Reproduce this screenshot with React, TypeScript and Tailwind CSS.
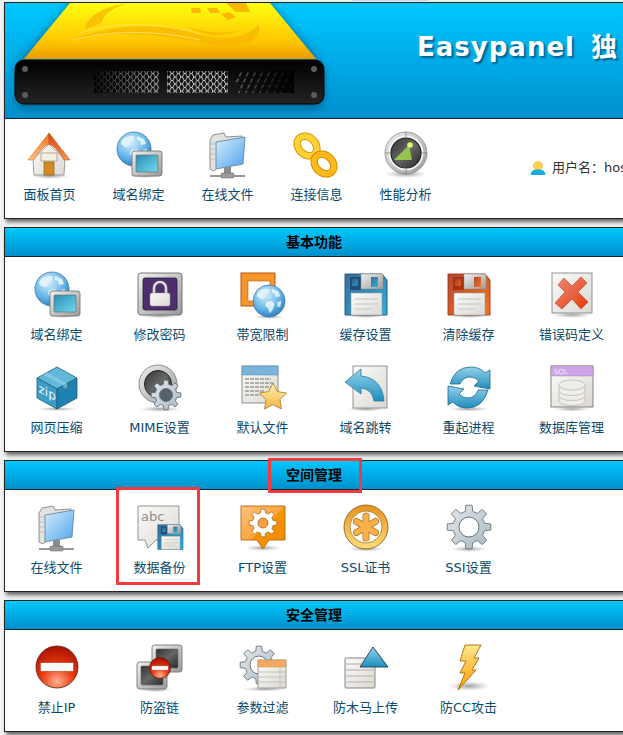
import type { ReactNode } from "react";

// builds a cog outline, returned path is used by all the gear icons
function gearPath(cx: number, cy: number, R: number, r: number, teeth: number): string {
  const step = (Math.PI * 2) / teeth;
  const pts: string[] = [];
  for (let i = 0; i < teeth; i++) {
    const a = i * step - Math.PI / 2;
    const w = step * 0.2;
    const list: [number, number][] = [
      [r, a - w * 1.5],
      [R, a - w * 0.9],
      [R, a + w * 0.9],
      [r, a + w * 1.5],
    ];
    for (const [rad, ang] of list) {
      pts.push(`${(cx + rad * Math.cos(ang)).toFixed(2)},${(cy + rad * Math.sin(ang)).toFixed(2)}`);
    }
  }
  return "M" + pts.join(" L") + " Z";
}

function Defs() {
  return (
    <svg className="absolute w-0 h-0" aria-hidden="true">
      <defs>
        <radialGradient id="sh">
          <stop offset="0" stopColor="#777" stopOpacity="0.7" />
          <stop offset="1" stopColor="#999" stopOpacity="0" />
        </radialGradient>
        <radialGradient id="globe" cx="0.4" cy="0.3" r="0.8">
          <stop offset="0" stopColor="#d8effc" />
          <stop offset="0.55" stopColor="#6ab8ea" />
          <stop offset="1" stopColor="#1d6fb2" />
        </radialGradient>
        <linearGradient id="frame" x1="0" y1="0" x2="1" y2="1">
          <stop offset="0" stopColor="#f0f0ee" />
          <stop offset="1" stopColor="#9a9a98" />
        </linearGradient>
        <linearGradient id="screen" x1="0" y1="0" x2="1" y2="1">
          <stop offset="0" stopColor="#2c8db5" />
          <stop offset="1" stopColor="#70d8ec" />
        </linearGradient>
        <linearGradient id="dark" x1="0" y1="0" x2="1" y2="1">
          <stop offset="0" stopColor="#333" />
          <stop offset="0.5" stopColor="#666" />
          <stop offset="1" stopColor="#2a2a2a" />
        </linearGradient>
        <linearGradient id="paper" x1="0" y1="0" x2="1" y2="1">
          <stop offset="0" stopColor="#fbfbf9" />
          <stop offset="1" stopColor="#dbd8d1" />
        </linearGradient>
        <linearGradient id="folder" x1="0" y1="0" x2="1" y2="1">
          <stop offset="0" stopColor="#d6eefd" />
          <stop offset="1" stopColor="#4fa2ec" />
        </linearGradient>
        <linearGradient id="orange" x1="0" y1="0" x2="1" y2="1">
          <stop offset="0" stopColor="#ffc27a" />
          <stop offset="0.5" stopColor="#ffa53c" />
          <stop offset="0.51" stopColor="#f79200" />
          <stop offset="1" stopColor="#f08a00" />
        </linearGradient>
        <linearGradient id="roofL" x1="0" y1="0" x2="0" y2="1">
          <stop offset="0" stopColor="#f0701c" />
          <stop offset="1" stopColor="#ffc27c" />
        </linearGradient>
        <linearGradient id="roofR" x1="0" y1="0" x2="0" y2="1">
          <stop offset="0" stopColor="#d8420e" />
          <stop offset="1" stopColor="#f6964a" />
        </linearGradient>
        <linearGradient id="floppyBlue" x1="0" y1="0" x2="1" y2="1">
          <stop offset="0" stopColor="#3a6d96" />
          <stop offset="1" stopColor="#2eb0dc" />
        </linearGradient>
        <linearGradient id="floppyRed" x1="0" y1="0" x2="1" y2="1">
          <stop offset="0" stopColor="#b04a30" />
          <stop offset="1" stopColor="#f8741c" />
        </linearGradient>
        <linearGradient id="xRed" x1="0" y1="0" x2="1" y2="1">
          <stop offset="0" stopColor="#e88f80" />
          <stop offset="1" stopColor="#e63a08" />
        </linearGradient>
        <linearGradient id="arrow" x1="0" y1="0" x2="0" y2="1">
          <stop offset="0" stopColor="#93d2ea" />
          <stop offset="1" stopColor="#1f8dbc" />
        </linearGradient>
        <linearGradient id="steel" x1="0" y1="0" x2="1" y2="1">
          <stop offset="0" stopColor="#e4eaee" />
          <stop offset="1" stopColor="#a8b6be" />
        </linearGradient>
        <linearGradient id="ring" x1="0" y1="0" x2="0" y2="1">
          <stop offset="0" stopColor="#e8921e" />
          <stop offset="1" stopColor="#ffdc7a" />
        </linearGradient>
        <radialGradient id="stop" cx="0.5" cy="0.85" r="0.85">
          <stop offset="0" stopColor="#ffb090" />
          <stop offset="0.45" stopColor="#e83a10" />
          <stop offset="1" stopColor="#a81000" />
        </radialGradient>
        <linearGradient id="bolt" x1="0" y1="0" x2="0" y2="1">
          <stop offset="0" stopColor="#ffe88c" />
          <stop offset="1" stopColor="#ff9a00" />
        </linearGradient>
        <linearGradient id="star" x1="0" y1="0" x2="0" y2="1">
          <stop offset="0" stopColor="#fff0b4" />
          <stop offset="1" stopColor="#f5b540" />
        </linearGradient>
      </defs>
    </svg>
  );
}

const Shadow = ({ cx = 24, cy = 45, rx = 20, ry = 3 }: { cx?: number; cy?: number; rx?: number; ry?: number }) => (
  <ellipse cx={cx} cy={cy} rx={rx} ry={ry} fill="url(#sh)" />
);

const Globe = ({ cx, cy, r }: { cx: number; cy: number; r: number }) => (
  <g transform={`translate(${cx} ${cy}) scale(${r / 17})`}>
    <circle r="17" fill="url(#globe)" stroke="#3a78a8" strokeWidth="0.8" />
    <path
      d="M-12,-9 C-8,-13 -2,-14 1,-12 L-1,-8 L-5,-7 L-4,-3 L-9,-2 L-13,-5 Z M3,-13 L10,-10 L12,-5 L7,-4 L6,-8 L3,-9 Z M-3,1 L3,0 L6,3 L4,9 L1,13 L-1,8 L-4,5 Z M9,1 L13,0 L12,6 L9,6 Z"
      fill="#e6f4fc"
      opacity="0.9"
    />
  </g>
);

const Monitor = ({ x, y, w, h, fill }: { x: number; y: number; w: number; h: number; fill: string }) => (
  <g>
    <rect x={x} y={y} width={w} height={h} rx="2.5" fill="url(#frame)" stroke="#777" strokeWidth="0.9" />
    <rect x={x + 4} y={y + 4} width={w - 8} height={h - 8} rx="1" fill={fill} stroke="#666" strokeWidth="0.6" />
  </g>
);

const Floppy = ({ fill, dark }: { fill: string; dark: string }) => (
  <g>
    <path d="M3,3 L40,3 L45,9 L45,44 L3,44 Z" fill={fill} stroke={dark} strokeWidth="0.9" />
    <rect x="8" y="6" width="11" height="13" fill={dark} />
    <rect x="10" y="8" width="6" height="7" fill={fill} opacity="0.7" />
    <rect x="19" y="3" width="22" height="15" fill="url(#frame)" stroke="#888" strokeWidth="0.5" />
    <rect x="29" y="6" width="7" height="10" fill={fill} />
    <rect x="9" y="22" width="31" height="22" fill="url(#paper)" stroke="#999" strokeWidth="0.5" />
    <path d="M13,28 H36 M13,33 H36 M13,38 H30" stroke="#c8c6c0" strokeWidth="1.2" />
  </g>
);

const Gear = ({ cx, cy, R, r, hole, holeFill = "#fff" }: { cx: number; cy: number; R: number; r: number; hole: number; holeFill?: string }) => (
  <g>
    <path d={gearPath(cx, cy, R, r, 8)} fill="url(#steel)" stroke="#68767e" strokeWidth="0.9" strokeLinejoin="round" />
    <circle cx={cx} cy={cy} r={hole} fill={holeFill} stroke="#68767e" strokeWidth="1" />
  </g>
);

const Stop = ({ cx, cy, r }: { cx: number; cy: number; r: number }) => (
  <g>
    <circle cx={cx} cy={cy} r={r} fill="url(#stop)" stroke="#5a1a10" strokeWidth="0.8" />
    <rect x={cx - r * 0.78} y={cy - r * 0.2} width={r * 1.56} height={r * 0.4} fill="#fff" stroke="#b04030" strokeWidth="0.4" />
  </g>
);

const Ico = ({ children }: { children: ReactNode }) => (
  <svg viewBox="0 0 48 48" className="w-12 h-12 block">
    {children}
  </svg>
);

const icons: Record<string, ReactNode> = {
  home: (
    <Ico>
      <Shadow cy={45} rx={19} />
      <path d="M7,28 L23,13 L39,28 L38,44 L8,44 Z" fill="url(#paper)" stroke="#8a8a80" strokeWidth="0.8" />
      <path d="M15,22 H31 V30 H15 Z" fill="#f4efe4" stroke="#a08a60" strokeWidth="0.7" />
      <rect x="18" y="31" width="10" height="13" fill="#d08a20" stroke="#96601a" strokeWidth="0.7" />
      <path d="M23,2 L2,29 L8,29 Q16,15 23,13 Z" fill="url(#roofL)" stroke="#c8601c" strokeWidth="0.5" />
      <path d="M23,2 L44,29 L38,29 Q30,15 23,13 Z" fill="url(#roofR)" stroke="#b8481c" strokeWidth="0.5" />
    </Ico>
  ),
  domain: (
    <Ico>
      <Globe cx={19} cy={18} r={17} />
      <Shadow cx={30} cy={45} rx={15} ry={2} />
      <Monitor x={17} y={20} w={30} h={25} fill="url(#screen)" />
    </Ico>
  ),
  folder: (
    <Ico>
      <path d="M6,9 L9,4 L20,2 L22,6 L38,5 L38,12 L10,40 L6,38 Z" fill="#e2e2e0" stroke="#868686" strokeWidth="0.9" />
      <path d="M6,13 L11,13 M6,18 L11,18 M6,23 L11,23 M6,28 L11,28" stroke="#aaa" strokeWidth="0.6" />
      <path d="M12,11 L41,6 L39,33 L12,38 Z" fill="url(#folder)" stroke="#5a7d9c" strokeWidth="0.8" />
      <rect x="20" y="36" width="7" height="7" fill="#8c8c8c" />
      <path d="M6,45 H41" stroke="#777" strokeWidth="1.6" />
      <rect x="17" y="42" width="13" height="5" rx="1" fill="#9a9a9a" stroke="#666" strokeWidth="0.5" />
    </Ico>
  ),
  chain: (
    <Ico>
      <g fill="none">
        <ellipse cx="14" cy="15" rx="11" ry="8.5" transform="rotate(45 14 15)" stroke="#d99a00" strokeWidth="7.5" />
        <ellipse cx="14" cy="15" rx="11" ry="8.5" transform="rotate(45 14 15)" stroke="#ffd238" strokeWidth="5.5" />
        <ellipse cx="31" cy="33" rx="11" ry="8.5" transform="rotate(45 31 33)" stroke="#d98a00" strokeWidth="7.5" />
        <ellipse cx="31" cy="33" rx="11" ry="8.5" transform="rotate(45 31 33)" stroke="#ffb81c" strokeWidth="5.5" />
      </g>
    </Ico>
  ),
  radar: (
    <Ico>
      <Shadow cy={43} rx={21} ry={4} />
      <circle cx="24" cy="22" r="21" fill="url(#frame)" stroke="#8a8a8a" strokeWidth="0.8" />
      <circle cx="24" cy="22" r="17.5" fill="#f5f5f5" />
      <circle cx="24" cy="22" r="15" fill="url(#dark)" stroke="#222" strokeWidth="1.2" />
      <path d="M24,1 V6 M24,38 V43 M3,22 H8 M40,22 H45" stroke="#777" strokeWidth="0.7" />
      <path d="M27,14 L30,29 L12,29 Z" fill="#9cc850" opacity="0.95" />
      <circle cx="28" cy="14" r="2.8" fill="#e8f070" />
    </Ico>
  ),
  lock: (
    <Ico>
      <Shadow cy={45} rx={20} ry={2} />
      <rect x="2" y="2" width="44" height="42" rx="3" fill="url(#frame)" stroke="#666" strokeWidth="0.9" />
      <rect x="7" y="7" width="34" height="32" rx="2" fill="#4c2f6c" stroke="#2a1a40" strokeWidth="0.8" />
      <path d="M18,23 V17 A6,6 0 0 1 30,17 V23" fill="none" stroke="#dcdcd6" strokeWidth="2.6" />
      <rect x="14" y="22" width="20" height="13" rx="2" fill="url(#paper)" stroke="#999" strokeWidth="0.5" />
    </Ico>
  ),
  bandwidth: (
    <Ico>
      <rect x="2" y="2" width="34" height="33" fill="#f6952c" stroke="#b85a10" strokeWidth="1" />
      <rect x="9" y="10" width="22" height="20" fill="#fff" stroke="#b85a10" strokeWidth="0.6" />
      <Shadow cx={30} cy={46} rx={15} ry={2} />
      <Globe cx={30} cy={30} r={16} />
    </Ico>
  ),
  floppyBlue: (
    <Ico>
      <Shadow cy={45} rx={20} ry={2} />
      <Floppy fill="url(#floppyBlue)" dark="#1f4f7a" />
    </Ico>
  ),
  floppyRed: (
    <Ico>
      <Shadow cy={45} rx={20} ry={2} />
      <Floppy fill="url(#floppyRed)" dark="#a83216" />
    </Ico>
  ),
  error: (
    <Ico>
      <Shadow cy={44} rx={20} ry={3} />
      <rect x="4" y="2" width="40" height="40" fill="url(#paper)" stroke="#888" strokeWidth="0.9" />
      <path
        d="M10,14 L16,7 L24,15 L33,6 L39,12 L30,21 L40,31 L33,38 L24,28 L14,38 L7,32 L17,21 Z"
        fill="url(#xRed)"
        stroke="#c04020"
        strokeWidth="0.6"
      />
    </Ico>
  ),
  zip: (
    <Ico>
      <Shadow cy={45} rx={20} ry={2} />
      <path d="M24,3 L44,14 L24,25 L4,14 Z" fill="#62b8d8" stroke="#225e80" strokeWidth="0.8" />
      <path d="M4,14 L24,25 L24,45 L4,34 Z" fill="#3c9ec8" stroke="#225e80" strokeWidth="0.8" />
      <path d="M44,14 L24,25 L24,45 L44,34 Z" fill="#1f82ae" stroke="#225e80" strokeWidth="0.8" />
      <path d="M14,8.5 L34,19.5 L34,25 L30,23 L30,21 L10,11 Z" fill="#8fd0e6" opacity="0.6" />
      <text x="0" y="0" fontSize="12" fill="#eaf7fc" fontFamily="DejaVu Sans, sans-serif" transform="translate(5.5 28) skewY(28)">
        zip
      </text>
    </Ico>
  ),
  mime: (
    <Ico>
      <Shadow cy={45} rx={20} ry={3} />
      <circle cx="22" cy="20" r="19" fill="url(#frame)" stroke="#777" strokeWidth="0.8" />
      <circle cx="22" cy="20" r="13.5" fill="url(#dark)" stroke="#222" strokeWidth="1" />
      <Gear cx={30} cy={31} R={15} r={11} hole={6.5} holeFill="#55606a" />
    </Ico>
  ),
  docStar: (
    <Ico>
      <rect x="3" y="2" width="36" height="37" fill="url(#paper)" stroke="#777" strokeWidth="0.8" />
      <rect x="3" y="2" width="36" height="9" fill="#78b4dc" stroke="#5a86a4" strokeWidth="0.5" />
      <path d="M6,15 H32 M6,19 H34 M6,23 H32 M6,27 H26 M6,31 H22" stroke="#9a9a94" strokeWidth="1.3" strokeDasharray="4 1" />
      <path
        d="M34,19 L38.4,27.6 L47.5,29 L41,35.6 L42.4,45 L34,40.6 L25.6,45 L27,35.6 L20.5,29 L29.6,27.6 Z"
        fill="url(#star)"
        stroke="#a87a20"
        strokeWidth="0.8"
      />
    </Ico>
  ),
  redirect: (
    <Ico>
      <Shadow cy={45} rx={18} ry={2.5} />
      <rect x="11" y="2" width="34" height="42" fill="url(#paper)" stroke="#888" strokeWidth="0.9" />
      <path
        d="M3,18 L19,5 L19,12 Q40,14 42,37 L32,37 Q30,25 19,24 L19,30 Z"
        fill="url(#arrow)"
        stroke="#2a7ca4"
        strokeWidth="0.8"
      />
    </Ico>
  ),
  refresh: (
    <Ico>
      <Shadow cy={45} rx={20} ry={2.5} />
      <g fill="url(#arrow)" stroke="#1f6a90" strokeWidth="0.8">
        <path d="M5,20 Q10,3 26,3 Q35,3 40,9 L45,6 L45,25 L29,22 L34,17 Q30,13 25,13 Q18,13 15,20 Z" />
        <path d="M43,26 Q38,44 22,44 Q13,44 8,38 L3,41 L3,22 L19,25 L14,30 Q18,34 23,34 Q30,34 33,26 Z" />
      </g>
    </Ico>
  ),
  sql: (
    <Ico>
      <Shadow cy={45} rx={18} ry={2.5} />
      <rect x="3" y="2" width="42" height="41" fill="url(#paper)" stroke="#777" strokeWidth="0.9" />
      <rect x="3" y="2" width="42" height="10" fill="#cda4e8" stroke="#888" strokeWidth="0.4" />
      <text x="6" y="10" fontSize="7" fill="#f4ecfa" fontFamily="DejaVu Sans, sans-serif">
        SQL
      </text>
      <g fill="#efeee9" stroke="#c0bfb8" strokeWidth="0.9">
        <path d="M11,33 V37 A13,4.5 0 0 0 37,37 V33 Z" />
        <path d="M11,27 V32 A13,4.5 0 0 0 37,32 V27 Z" />
        <path d="M11,21 V27 A13,4.5 0 0 0 37,27 V21 Z" />
        <ellipse cx="24" cy="21" rx="13" ry="5" />
      </g>
    </Ico>
  ),
  backup: (
    <Ico>
      <path d="M2,2 H43 V36 H20 L12,44 L9,36 H2 Z" fill="url(#paper)" stroke="#888" strokeWidth="0.9" />
      <text x="5" y="17" fontSize="13" fill="#8e8e8e" fontFamily="DejaVu Sans, sans-serif">
        abc
      </text>
      <g transform="translate(20 19) scale(0.6)">
        <Floppy fill="url(#floppyBlue)" dark="#1f4f7a" />
      </g>
    </Ico>
  ),
  ftp: (
    <Ico>
      <Shadow cy={44} rx={18} ry={3} />
      <path d="M2,2 H46 V36 H30 L24,45 L18,36 H2 Z" fill="url(#orange)" stroke="#b06a10" strokeWidth="0.9" />
      <path d={gearPath(24, 19, 14, 10.5, 8)} fill="#fff" stroke="#a86a18" strokeWidth="0.8" strokeLinejoin="round" />
      <circle cx="24" cy="19" r="5" fill="#f9a040" stroke="#a86a18" strokeWidth="0.8" />
    </Ico>
  ),
  ssl: (
    <Ico>
      <Shadow cy={45} rx={18} ry={2.5} />
      <circle cx="24" cy="23" r="22" fill="url(#ring)" stroke="#8a6420" strokeWidth="0.9" />
      <circle cx="24" cy="23" r="16" fill="#fff" stroke="#a07a30" strokeWidth="0.8" />
      <g stroke="#b07a20" strokeWidth="7" strokeLinecap="round">
        <path d="M24,12 V34 M14.5,17.5 L33.5,28.5 M14.5,28.5 L33.5,17.5" />
      </g>
      <g stroke="#fbb04c" strokeWidth="5.4" strokeLinecap="round">
        <path d="M24,12 V34 M14.5,17.5 L33.5,28.5 M14.5,28.5 L33.5,17.5" />
      </g>
    </Ico>
  ),
  ssi: (
    <Ico>
      <Shadow cy={45} rx={18} ry={3} />
      <Gear cx={24} cy={23} R={22} r={16} hole={10} />
    </Ico>
  ),
  stop: (
    <Ico>
      <Stop cx={24} cy={23} r={21} />
    </Ico>
  ),
  hotlink: (
    <Ico>
      <Monitor x={16} y={1} w={30} h={27} fill="url(#dark)" />
      <Shadow cx={20} cy={46} rx={16} ry={2} />
      <Monitor x={1} y={18} w={30} h={27} fill="url(#dark)" />
      <Stop cx={24} cy={24} r={10.5} />
    </Ico>
  ),
  filter: (
    <Ico>
      <Shadow cx={26} cy={45} rx={22} ry={2.5} />
      <Gear cx={20} cy={21} R={19} r={14} hole={9} />
      <rect x="19" y="16" width="28" height="28" fill="url(#paper)" stroke="#8a8a80" strokeWidth="0.8" />
      <rect x="19" y="16" width="28" height="7" fill="#f6a860" stroke="#c88a40" strokeWidth="0.4" />
      <path d="M19,28 H47 M19,33 H47 M19,38 H47 M41,23 V44" stroke="#bdbbb2" strokeWidth="0.8" />
    </Ico>
  ),
  upload: (
    <Ico>
      <rect x="3" y="14" width="30" height="30" rx="1" fill="url(#paper)" stroke="#777" strokeWidth="0.9" />
      <path d="M3,20 H33 M3,26 H33 M3,32 H33 M3,38 H33" stroke="#c6c4bc" strokeWidth="1.4" />
      <path d="M31,3 L46,23 L18,23 Z" fill="url(#arrow)" stroke="#1f4a66" strokeWidth="1" strokeLinejoin="round" />
    </Ico>
  ),
  bolt: (
    <Ico>
      <Shadow cx={24} cy={42} rx={21} ry={5} />
      <path
        d="M20,1 L36,1 L29,14 L34,14 L27,26 L31,26 L13,46 L20,29 L15,29 L21,17 L15,17 Z"
        fill="url(#bolt)"
        stroke="#a86a10"
        strokeWidth="0.9"
        strokeLinejoin="round"
      />
    </Ico>
  ),
};

function Tile({ icon, label, w }: { icon: string; label: string; w: string }) {
  return (
    <div className={`flex flex-col items-center shrink-0 ${w}`}>
      {icons[icon]}
      <span className="mt-[7px] text-[13px] leading-[18px] text-[#0b4a6c] whitespace-nowrap">{label}</span>
    </div>
  );
}

function Panel({ title, children, marks }: { title: string; children: ReactNode; marks?: ReactNode }) {
  return (
    <section className="relative mt-2 w-[620px] border border-[#222] bg-white shadow-[2px_3px_4px_rgba(0,0,0,0.6)]">
      <h2 className="h-[29px] border-b border-[#222] bg-linear-to-b from-[#00c8ff] to-[#0090cc] text-center text-[14px] leading-[28px] font-bold text-black">
        {title}
      </h2>
      <div className="grid grid-cols-[repeat(6,103px)] gap-y-5 pt-[14px] pb-[14px]">{children}</div>
      {marks}
    </section>
  );
}

const TOP = [
  ["home", "面板首页"],
  ["domain", "域名绑定"],
  ["folder", "在线文件"],
  ["chain", "连接信息"],
  ["radar", "性能分析"],
];

const BASIC = [
  ["domain", "域名绑定"],
  ["lock", "修改密码"],
  ["bandwidth", "帯宽限制"],
  ["floppyBlue", "缓存设置"],
  ["floppyRed", "清除缓存"],
  ["error", "错误码定义"],
  ["zip", "网页压缩"],
  ["mime", "MIME设置"],
  ["docStar", "默认文件"],
  ["redirect", "域名跳转"],
  ["refresh", "重起进程"],
  ["sql", "数据库管理"],
];

const SPACE = [
  ["folder", "在线文件"],
  ["backup", "数据备份"],
  ["ftp", "FTP设置"],
  ["ssl", "SSL证书"],
  ["ssi", "SSI设置"],
];

const SECURITY = [
  ["stop", "禁止IP"],
  ["hotlink", "防盗链"],
  ["filter", "参数过滤"],
  ["upload", "防木马上传"],
  ["bolt", "防CC攻击"],
];

function ServerArt() {
  return (
    <svg viewBox="5 3 340 115" className="w-[340px] h-[115px] block shrink-0">
      <defs>
        <linearGradient id="lid" x1="0" y1="0" x2="0" y2="1">
          <stop offset="0" stopColor="#ffff10" />
          <stop offset="0.7" stopColor="#ffc400" />
          <stop offset="1" stopColor="#e69800" />
        </linearGradient>
        <linearGradient id="front" x1="0" y1="0" x2="0" y2="1">
          <stop offset="0" stopColor="#000" />
          <stop offset="1" stopColor="#242424" />
        </linearGradient>
        <filter id="blur" x="-10%" y="-20%" width="120%" height="150%">
          <feGaussianBlur stdDeviation="4" />
        </filter>
        <pattern id="hex" width="6.4" height="7" patternUnits="userSpaceOnUse">
          <path d="M1.6,0 L3.2,0 L4.8,3.5 L3.2,7 L1.6,7 L0,3.5 Z M4.8,3.5 H6.4" fill="none" stroke="#ddd" strokeWidth="0.9" />
        </pattern>
        <pattern id="dots" width="7" height="6" patternUnits="userSpaceOnUse" patternTransform="skewX(-25)">
          <path d="M2,0.5 V4.5" stroke="#bbb" strokeWidth="1" />
        </pattern>
        <linearGradient id="fadeL" x1="0" y1="0" x2="1" y2="0">
          <stop offset="0" stopColor="#000" stopOpacity="0.9" />
          <stop offset="1" stopColor="#000" stopOpacity="0.1" />
        </linearGradient>
        <linearGradient id="fadeR" x1="0" y1="0" x2="1" y2="0">
          <stop offset="0" stopColor="#000" stopOpacity="0.2" />
          <stop offset="1" stopColor="#000" stopOpacity="0.95" />
        </linearGradient>
      </defs>
      <path d="M70,3 L270,3 L322,62 L18,62 Z" fill="#003a60" opacity="0.45" filter="url(#blur)" />
      <rect x="15" y="64" width="309" height="44" rx="9" fill="#003050" opacity="0.5" filter="url(#blur)" />
      <path d="M70,3 L270,3 L317,60 L23,60 Z" fill="url(#lid)" />
      <path d="M23,59.5 H317" stroke="#2aa0c0" strokeWidth="1" />
      <g fill="#f6b800" opacity="0.75">
        <path d="M85,30 C86,16 104,6 130,3 C116,6 104,12 102,22 C98,25 91,27 85,30 Z" />
        <path d="M72,40 C110,24 160,22 198,34 C220,42 250,38 258,24 C264,38 248,48 216,45 C180,40 130,26 72,40 Z" />
        <path d="M186,25 C200,33 226,34 240,30 C224,38 200,36 186,25 Z" />
      </g>
      <path d="M72,40 C120,28 165,32 200,40" fill="none" stroke="#ffe680" strokeWidth="0.9" opacity="0.8" />
      <path d="M80,33 C120,20 165,24 200,34" fill="none" stroke="#ffe680" strokeWidth="0.9" opacity="0.7" />
      <g fill="#f8b800">
        <path d="M191,8 H200 L201,13 H192 Z" />
        <path d="M207,8 H217 L220,13 H210 Z" />
        <path d="M221,14 L229,12 L236,17 L228,20 Z" />
        <path d="M226,3 H246 L250,12 H236 Z" />
      </g>
      <rect x="15" y="60" width="309" height="44" rx="9" fill="url(#front)" stroke="#000" strokeWidth="1" />
      <g fill="#5c5c5c">
        <circle cx="25" cy="69" r="3" />
        <circle cx="25" cy="95" r="3" />
        <circle cx="314" cy="69" r="3" />
        <circle cx="314" cy="95" r="3" />
      </g>
      <rect x="94" y="71" width="65" height="22" fill="url(#hex)" />
      <rect x="94" y="71" width="65" height="22" fill="url(#fadeL)" />
      <rect x="167" y="71" width="61" height="22" fill="url(#hex)" />
      <rect x="236" y="71" width="58" height="22" fill="url(#dots)" />
      <rect x="236" y="71" width="58" height="22" fill="url(#fadeR)" />
    </svg>
  );
}

export default function App() {
  return (
    <div className="w-[623px] h-[735px] overflow-hidden bg-[#f4f4f4] font-['DejaVu_Sans','Noto_Sans_CJK_SC',sans-serif]">
      <Defs />
      <div className="h-[2px]">
        <div className="ml-[352px] w-[76px] h-px bg-[#c6d8ee]" />
      </div>
      <div className="ml-1 w-[620px]">
        {/* banner + quick links */}
        <header className="border border-[#222] bg-white shadow-[2px_3px_4px_rgba(0,0,0,0.6)]">
          <div className="flex h-[116px] border-b border-[#222] bg-linear-to-b from-[#00c8ff] to-[#0090cf]">
            <ServerArt />
            <p className="ml-[72px] pt-[29px] text-[26px] leading-[30px] font-bold tracking-[1px] [word-spacing:6px] whitespace-nowrap text-white [text-shadow:2px_2px_2px_#005f8c]">
              Easypanel 独
            </p>
          </div>
          <div className="flex items-center pt-3 pb-[14px]">
            {TOP.map(([icon, label]) => (
              <Tile key={label} icon={icon} label={label} w="w-[89px]" />
            ))}
            <div className="ml-[80px] flex items-center gap-[6px] text-[13px] text-[#333] whitespace-nowrap">
              <svg viewBox="0 0 16 14" className="w-4 h-[14px] block">
                <circle cx="8" cy="5" r="4.6" fill="#ffd24a" stroke="#e8b030" strokeWidth="0.5" />
                <path d="M0.5,14 C1,9.5 4,8.5 8,8.5 C12,8.5 15,9.5 15.5,14 Z" fill="#16aee0" />
              </svg>
              <span>用户名：hos</span>
            </div>
          </div>
        </header>

        <Panel title="基本功能">
          {BASIC.map(([icon, label]) => (
            <Tile key={label} icon={icon} label={label} w="w-[103px]" />
          ))}
        </Panel>

        <Panel
          title="空间管理"
          marks={
            <>
              <div className="absolute left-[263px] top-[-3px] w-[94px] h-[35px] border-[3px] border-[#f43a3e]" />
              <div className="absolute left-[111px] top-[26px] w-[84px] h-[98px] border-[3px] border-[#f43a3e]" />
            </>
          }
        >
          {SPACE.map(([icon, label]) => (
            <Tile key={label} icon={icon} label={label} w="w-[103px]" />
          ))}
        </Panel>

        <Panel title="安全管理">
          {SECURITY.map(([icon, label]) => (
            <Tile key={label} icon={icon} label={label} w="w-[103px]" />
          ))}
        </Panel>
      </div>
    </div>
  );
}
